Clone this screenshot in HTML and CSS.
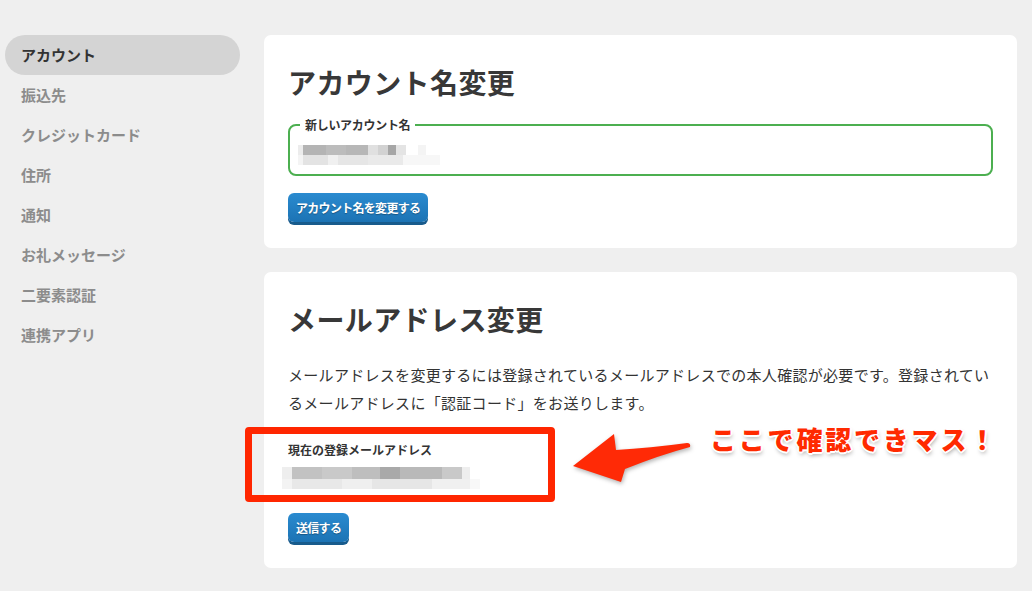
FILE: index.html
```html
<!DOCTYPE html>
<html lang="ja">
<head>
    <meta charset="UTF-8">
    <meta name="viewport" content="width=device-width, initial-scale=1.0">
    <title>アカウント設定</title>
    <link rel="stylesheet" href="styles.css">
</head>
<body>
    <div class="layout">
        <nav class="sidebar">
            <a class="nav-item active" href="#">アカウント</a>
            <a class="nav-item" href="#">振込先</a>
            <a class="nav-item" href="#">クレジットカード</a>
            <a class="nav-item" href="#">住所</a>
            <a class="nav-item" href="#">通知</a>
            <a class="nav-item" href="#">お礼メッセージ</a>
            <a class="nav-item" href="#">二要素認証</a>
            <a class="nav-item" href="#">連携アプリ</a>
        </nav>

        <main class="content">
            <section class="card">
                <h2 class="card-title">アカウント名変更</h2>
                <fieldset class="field">
                    <legend>新しいアカウント名</legend>
                    <div class="field-value">
                        <div class="mosaic-top name-top"></div>
                        <div class="mosaic-bottom name-bottom"></div>
                    </div>
                </fieldset>
                <button class="btn btn-name" type="button">アカウント名を変更する</button>
            </section>

            <section class="card card-mail">
                <h2 class="card-title">メールアドレス変更</h2>
                <p class="desc">メールアドレスを変更するには登録されているメールアドレスでの本人確認が必要です。登録されているメールアドレスに「認証コード」をお送りします。</p>
                <div class="current-label">現在の登録メールアドレス</div>
                <div class="current-value">
                    <div class="mosaic-top mail-top"></div>
                    <div class="mosaic-bottom mail-bottom"></div>
                </div>
                <button class="btn btn-send" type="button">送信する</button>

                <!-- annotation layer -->
                <div class="mark-box"></div>
                <svg class="mark-arrow" width="135" height="60" viewBox="0 0 135 60">
                    <path d="M8 41 L49 9 L51 25 Q85 23 122 18 Q126 18 125 22 Q95 30 60 44 L56 57 Z" fill="#ff2a06"/>
                </svg>
                <div class="mark-text">ここで確認できマス！</div>
            </section>
        </main>
    </div>
</body>
</html>
```

FILE: styles.css
```css
* {
    box-sizing: border-box;
}
body {
    margin: 0;
    background-color: #efefef;
    font-family: "Noto Sans CJK JP", "Noto Sans", sans-serif;
    color: #333;
}
.layout {
    display: flex;
    gap: 24px;
    padding: 35px 15px 0 5px;
}

/* sidebar */
.sidebar {
    width: 235px;
    flex-shrink: 0;
    display: flex;
    flex-direction: column;
}
.nav-item {
    display: block;
    height: 40px;
    line-height: 40px;
    padding-left: 16px;
    border-radius: 20px;
    font-size: 15px;
    font-weight: bold;
    color: #8c8c8c;
    text-decoration: none;
}
.nav-item.active {
    background-color: #d4d4d4;
    color: #333;
}

/* cards */
.content {
    flex: 1;
    display: flex;
    flex-direction: column;
    gap: 24px;
}
.card {
    background-color: #fff;
    border-radius: 7px;
    padding: 30px 24px 26px;
}
.card-mail {
    position: relative;
}
.card-title {
    margin: 0;
    font-size: 28px;
    line-height: 34px;
    font-weight: bold;
    letter-spacing: 0.4px;
    color: #383838;
}

.field {
    margin: 18px 0 0;
    padding: 8px 8px 9px;
    border: 2px solid #4caf50;
    border-radius: 8px;
}
.field legend {
    margin-left: 2px;
    padding: 0 5px;
    font-size: 12px;
    line-height: 16px;
    font-weight: bold;
    letter-spacing: -0.3px;
    color: #333;
}
.field-value {
    padding-top: 4px;
}

.mosaic-top,
.mosaic-bottom {
    height: 10px;
}
.name-top {
    width: 130px;
    background: linear-gradient(to right,
        #ececec 0, #ececec 5px,
        #b4b4b4 5px, #b4b4b4 28px,
        #bcbcbc 28px, #bcbcbc 48px,
        #b7b7b7 48px, #b7b7b7 70px,
        #e0e0e0 70px, #e0e0e0 80px,
        #d2d2d2 80px, #d2d2d2 90px,
        #a6a6a6 90px, #a6a6a6 98px,
        #e4e4e4 98px, #e4e4e4 108px,
        #fff 108px, #fff 120px,
        #f4f4f4 120px, #f4f4f4 128px,
        #fff 128px);
}
.name-bottom {
    width: 142px;
    background: linear-gradient(to right,
        #f4f4f4 0, #f4f4f4 5px,
        #e3e3e3 5px, #e3e3e3 30px,
        #f0f0f0 30px, #f0f0f0 40px,
        #e6e6e6 40px, #e6e6e6 70px,
        #eaeaea 70px, #eaeaea 105px,
        #f7f7f7 105px);
}

.btn {
    display: block;
    height: 29px;
    padding: 0 8px;
    border: none;
    border-radius: 6px;
    background: linear-gradient(#2a8bd0, #1c73b4);
    box-shadow: 0 3px 0 #185b8c;
    color: #fff;
    font-family: inherit;
    font-size: 12px;
    font-weight: bold;
    letter-spacing: -0.7px;
    text-shadow: 0 1px 1px rgba(0, 0, 0, 0.3);
    cursor: pointer;
}
.btn-name {
    margin-top: 17px;
}
.btn-send {
    margin-top: 24px;
}

.desc {
    margin: 25px 0 0;
    font-size: 15px;
    line-height: 28px;
    letter-spacing: 0.3px;
    color: #333;
}
.current-label {
    margin-top: 25px;
    font-size: 12px;
    line-height: 16px;
    font-weight: bold;
    color: #333;
}
.current-value {
    margin: 9px 0 0 -6px;
}
.mail-top {
    width: 188px;
    height: 12px;
    background: linear-gradient(to right,
        #eeeeee 0, #eeeeee 10px,
        #c2c2c2 10px, #c2c2c2 40px,
        #c9c9c9 40px, #c9c9c9 70px,
        #bebebe 70px, #bebebe 98px,
        #a9a9a9 98px, #a9a9a9 118px,
        #b9b9b9 118px, #b9b9b9 160px,
        #c9c9c9 160px, #c9c9c9 180px,
        #eeeeee 180px);
}
.mail-bottom {
    width: 198px;
    background: linear-gradient(to right,
        #f3f3f3 0, #f3f3f3 10px,
        #e8e8e8 10px, #e8e8e8 60px,
        #efefef 60px, #efefef 90px,
        #e6e6e6 90px, #e6e6e6 150px,
        #f0f0f0 150px, #f0f0f0 188px,
        #f8f8f8 188px);
}

/* annotation overlay */
.mark-box {
    position: absolute;
    left: -19px;
    top: 155px;
    width: 310px;
    height: 75px;
    border: 7px solid #ff2600;
    border-radius: 4px;
}
.mark-arrow {
    position: absolute;
    left: 301px;
    top: 153px;
    filter: drop-shadow(1px 2px 2px rgba(0, 0, 0, 0.3));
}
.mark-text {
    position: absolute;
    left: 446px;
    top: 152px;
    font-size: 26px;
    line-height: 30px;
    font-weight: 900;
    letter-spacing: 2.8px;
    color: #ff2a00;
    text-shadow:
        -2px 0 0 #fff, 2px 0 0 #fff, 0 -2px 0 #fff, 0 2px 0 #fff,
        -1px -1px 0 #fff, 1px 1px 0 #fff, -1px 1px 0 #fff, 1px -1px 0 #fff,
        1px 3px 4px rgba(0, 0, 0, 0.35);
}
```
